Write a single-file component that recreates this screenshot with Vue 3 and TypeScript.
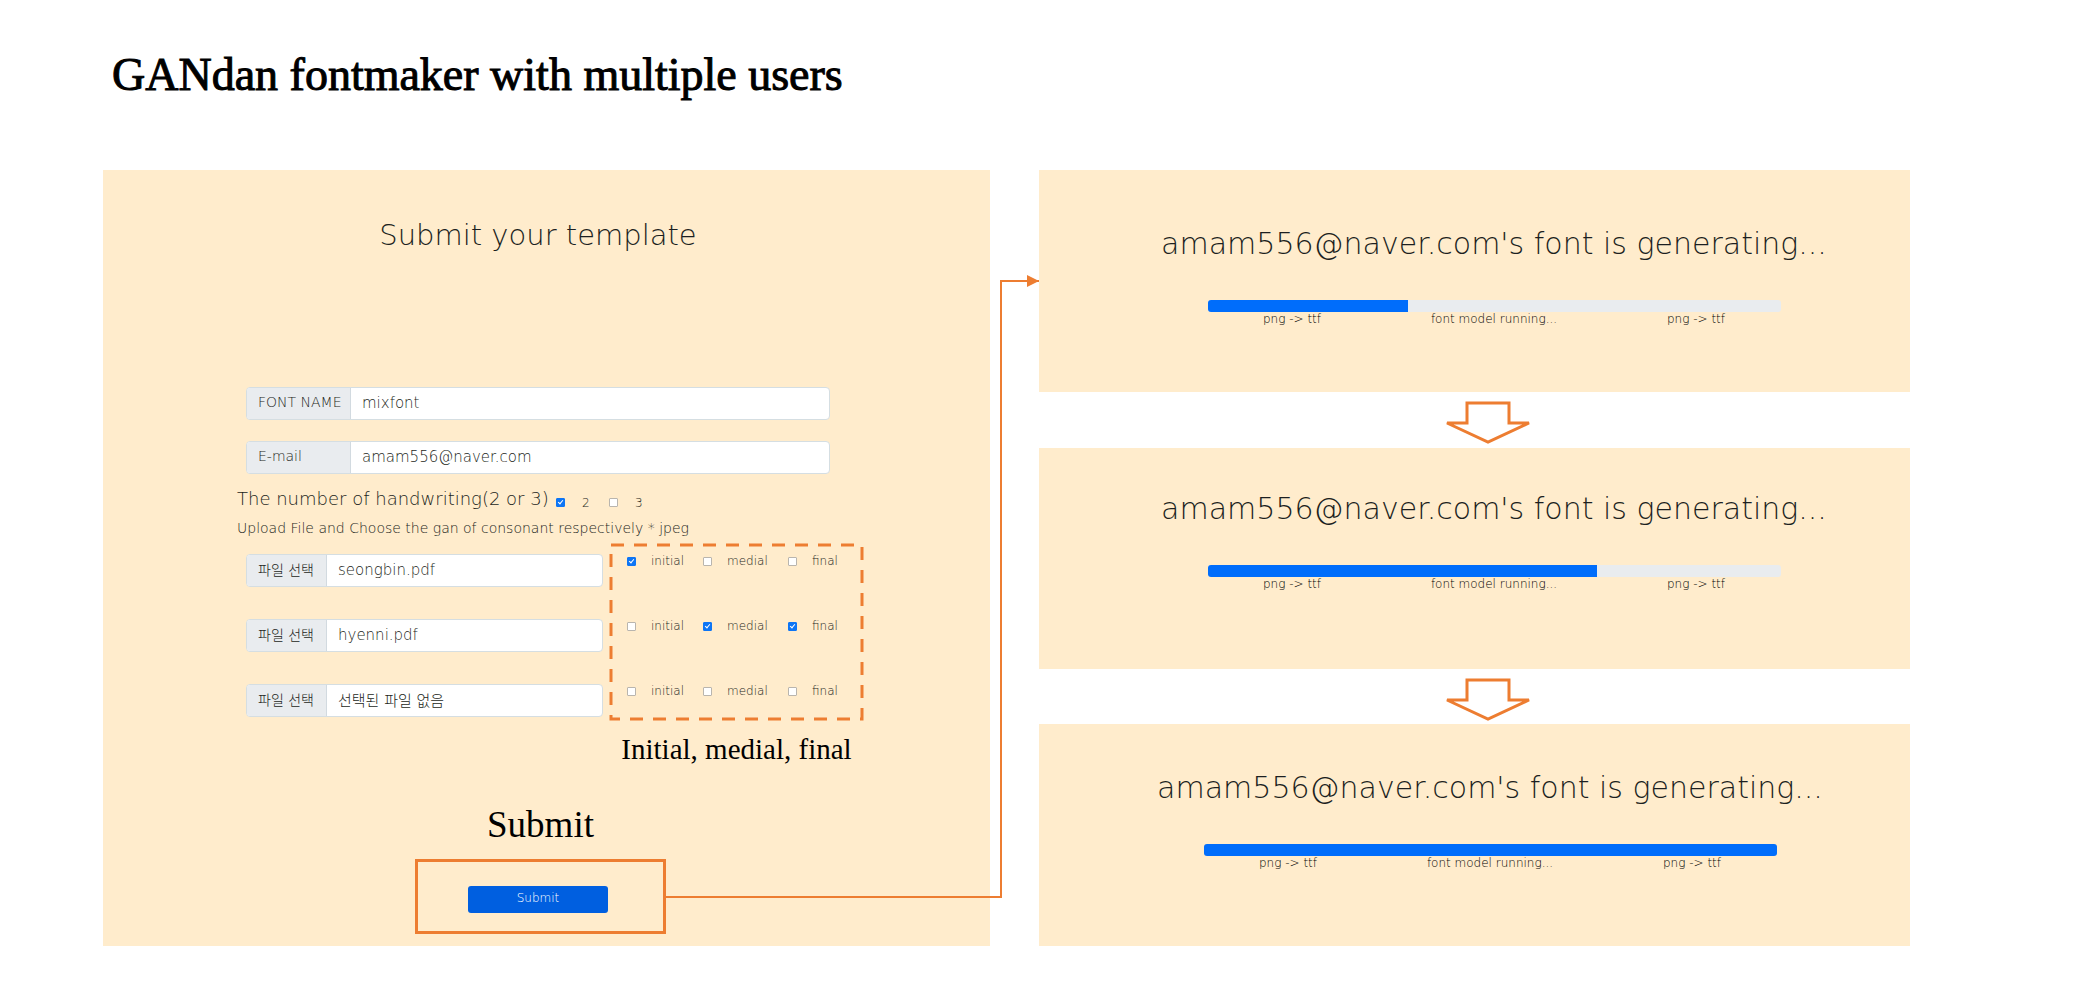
<script setup lang="ts">
import { reactive, ref } from 'vue'

interface FileRow {
  id: string
  name: string
  initial: boolean
  medial: boolean
  final: boolean
}

type Part = 'initial' | 'medial' | 'final'

const parts: Part[] = ['initial', 'medial', 'final']

const fontName = ref('mixfont')
const email = ref('amam556@naver.com')
const two = ref(true)
const three = ref(false)

const files = reactive<FileRow[]>([
  { id: 'file-1', name: 'seongbin.pdf', initial: true, medial: false, final: false },
  { id: 'file-2', name: 'hyenni.pdf', initial: false, medial: true, final: true },
  { id: 'file-3', name: '선택된 파일 없음', initial: false, medial: false, final: false },
])

const stages = [
  { id: 1, percent: 35 },
  { id: 2, percent: 68 },
  { id: 3, percent: 100 },
]
const steps = ['png -> ttf', 'font model running...', 'png -> ttf']
</script>

<template>
  <main class="slide">
    <h1 class="title">GANdan fontmaker with multiple users</h1>

    <div class="board">
      <form class="panel template" @submit.prevent>
        <h2 class="heading template-heading">Submit your template</h2>

        <div class="fields">
          <div class="group">
            <label class="tag" for="font-name">FONT NAME</label>
            <input id="font-name" v-model="fontName" class="value" type="text" />
          </div>
          <div class="group">
            <label class="tag" for="email">E-mail</label>
            <input id="email" v-model="email" class="value" type="text" />
          </div>
        </div>

        <div class="count">
          <span class="count-text">The number of handwriting(2 or 3)</span>
          <label class="check"><input v-model="two" type="checkbox" /><span>2</span></label>
          <label class="check"><input v-model="three" type="checkbox" /><span>3</span></label>
        </div>
        <p class="hint">Upload File and Choose the gan of consonant respectively * jpeg</p>

        <div class="uploads">
          <div class="files">
            <div v-for="file in files" :key="file.id" class="group">
              <button class="tag pick" type="button">파일 선택</button>
              <input :value="file.name" class="value" type="text" readonly aria-label="파일" />
            </div>
          </div>
          <div class="choices">
            <svg class="dashes" aria-hidden="true">
              <rect width="100%" height="100%" />
            </svg>
            <div v-for="file in files" :key="file.id" class="choice-row">
              <label v-for="part in parts" :key="part" class="check">
                <input v-model="file[part]" type="checkbox" /><span>{{ part }}</span>
              </label>
            </div>
          </div>
          <p class="note choices-note">Initial, medial, final</p>
        </div>

        <div class="send">
          <p class="note send-note">Submit</p>
          <div class="send-frame">
            <button class="send-button" type="submit">Submit</button>
          </div>
          <div class="lead"></div>
        </div>
      </form>

      <div class="link">
        <div class="elbow">
          <svg class="head" viewBox="0 0 12 12" aria-hidden="true"><path d="M0 0 12 6 0 12Z" /></svg>
        </div>
      </div>

      <div class="stages">
        <template v-for="stage in stages" :key="stage.id">
          <div v-if="stage.id > 1" class="down">
            <svg viewBox="0 0 94 44" aria-hidden="true">
              <path d="M26 3H68V23H88L47 42 6 23H26Z" />
            </svg>
          </div>
          <section class="panel stage" :class="{ opening: stage.id === 1, closing: stage.id === 3 }">
            <h2 class="heading stage-heading">amam556@naver.com's font is generating...</h2>
            <div class="track" role="progressbar" :aria-valuenow="stage.percent">
              <div class="bar" :style="{ width: stage.percent + '%' }"></div>
            </div>
            <div class="steps">
              <span v-for="(step, i) in steps" :key="i">{{ step }}</span>
            </div>
          </section>
        </template>
      </div>
    </div>
  </main>
</template>

<style>
body {
  margin: 0;
  background: #ffffff;
}
</style>

<style scoped>
.slide {
  box-sizing: border-box;
  padding: 43px 168px 46px 103px;
  color: #1c1f21;
  font-family: 'DejaVu Sans Light', 'DejaVu Sans', 'Noto Sans CJK KR', sans-serif;
  font-weight: 200;
}

.title {
  margin: 0 0 63px 9px;
  color: #000000;
  font: 400 46px/64px 'Liberation Serif', serif;
  -webkit-text-stroke: 1px #000000;
}

.board {
  display: grid;
  grid-template-columns: 887fr 49px 871fr;
}

.panel {
  background: #ffeccc;
}

.heading {
  margin: 0;
  font-size: 29px;
  font-weight: 200;
  line-height: 40px;
  text-align: center;
  white-space: nowrap;
}

.stage-heading {
  font-size: 30px;
}

.template {
  box-sizing: border-box;
  min-width: 0;
  padding: 45px 0 12px 134px;
}

.template-heading,
.fields {
  width: 584px;
  margin-left: 9px;
}

.template-heading {
  margin-bottom: 132px;
}

.fields {
  display: grid;
  gap: 21px;
}

.group {
  display: flex;
  box-sizing: border-box;
  height: 33px;
  overflow: hidden;
  border: 1px solid #d5dee2;
  border-radius: 4px;
  background: #ffffff;
}

.tag {
  box-sizing: border-box;
  flex: none;
  width: 104px;
  padding: 0 0 0 11px;
  border: 0;
  border-right: 1px solid #d2dae0;
  background: #e9ecef;
  color: #1c1f21;
  font: inherit;
  font-size: 14px;
  line-height: 29px;
  text-align: left;
  white-space: nowrap;
}

.pick {
  width: 80px;
}

.value {
  box-sizing: border-box;
  flex: 1;
  min-width: 0;
  padding: 0 11px 2px;
  border: 0;
  outline: 0;
  background: transparent;
  color: #1c1f21;
  font: inherit;
  font-size: 15px;
}

.count {
  display: flex;
  align-items: center;
  height: 24px;
  margin-top: 12px;
}

.count-text {
  width: 319px;
  font-size: 18px;
  white-space: nowrap;
}

.check {
  display: flex;
  align-items: center;
  gap: 14px;
  font-size: 12px;
  line-height: 16px;
}

.count .check {
  width: 53px;
  gap: 17px;
  padding-top: 9px;
}

.check input {
  position: relative;
  flex: none;
  box-sizing: border-box;
  width: 9px;
  height: 9px;
  margin: 0;
  border: 1px solid #b9b5ae;
  border-radius: 1px;
  appearance: none;
  background: #ffffff;
}

.check input:checked {
  border-color: #0d75f5;
  background: #0d75f5;
}

.check input:checked::before {
  position: absolute;
  top: 0;
  left: 2px;
  width: 2px;
  height: 4px;
  border: solid #ffffff;
  border-width: 0 1px 1px 0;
  transform: rotate(40deg);
  content: '';
}

.hint {
  margin: 8px 0 5px;
  font-size: 14px;
  line-height: 20px;
  white-space: nowrap;
}

.uploads {
  display: grid;
  grid-template-columns: 357px 251px;
  column-gap: 8px;
  margin-left: 9px;
}

.files {
  display: grid;
  align-content: start;
  gap: 32px;
  padding-top: 11px;
}

.choices {
  position: relative;
  display: grid;
  gap: 49px;
  margin-top: 2px;
  padding: 8px 0 20px 16px;
}

.dashes {
  position: absolute;
  inset: 0;
  width: 100%;
  height: 100%;
  overflow: visible;
  pointer-events: none;
}

.dashes rect {
  fill: none;
  stroke: #ed7d31;
  stroke-width: 3px;
  stroke-dasharray: 13 10;
}

.choice-row {
  display: grid;
  grid-template-columns: 76px 85px 1fr;
}

.choice-row .check {
  gap: 15px;
  font-size: 12px;
}

.note {
  margin: 0;
  color: #000000;
  font-family: 'Liberation Serif', serif;
  font-weight: 400;
  text-align: center;
}

.choices-note {
  grid-column: 2;
  padding-top: 10px;
  font-size: 29px;
  line-height: 40px;
}

.send {
  display: grid;
  grid-template-columns: 251px 1fr;
  align-items: center;
  margin: 32px -12px 0 178px;
}

.send-note {
  grid-column: 1;
  margin-bottom: 10px;
  font-size: 37px;
  line-height: 48px;
}

.send-frame {
  grid-column: 1;
  padding: 24px 55px 18px 50px;
  border: 3px solid #ed7d31;
}

.send-button {
  display: block;
  width: 100%;
  height: 27px;
  padding: 0 0 3px;
  border: 0;
  border-radius: 3px;
  background: #005fe0;
  color: #ffffff;
  font: inherit;
  font-size: 12px;
}

.lead {
  height: 2px;
  background: #ed7d31;
}

.link {
  padding: 110px 0 49px 10px;
}

.elbow {
  position: relative;
  box-sizing: border-box;
  height: 100%;
  border-left: 2px solid #ed7d31;
}

.elbow::before {
  display: block;
  height: 2px;
  background: #ed7d31;
  content: '';
}

.head {
  position: absolute;
  top: -5px;
  right: 0;
  width: 12px;
  height: 12px;
  fill: #ed7d31;
}

.stages {
  display: grid;
  grid-template-rows: 1fr 56px 1fr 55px 1fr;
  min-width: 0;
}

.stage {
  box-sizing: border-box;
  display: flex;
  flex-direction: column;
  align-items: center;
  padding: 41px 0 0 39px;
}

.opening {
  padding-top: 54px;
}

.closing {
  padding-top: 44px;
  padding-right: 8px;
}

.track {
  width: 573px;
  height: 12px;
  margin-top: 36px;
  overflow: hidden;
  border-radius: 3px;
  background: #e9ecef;
}

.bar {
  height: 100%;
  background: #006dfb;
}

.steps {
  display: grid;
  grid-template-columns: repeat(3, 202px);
  color: #000000;
  font-size: 12px;
  line-height: 14px;
  text-align: center;
}

.down {
  display: grid;
  place-items: center;
  padding: 4px 0 0 26px;
}

.down svg {
  width: 94px;
  height: 44px;
  fill: #ffffff;
  stroke: #ed7d31;
  stroke-width: 3px;
}
</style>
